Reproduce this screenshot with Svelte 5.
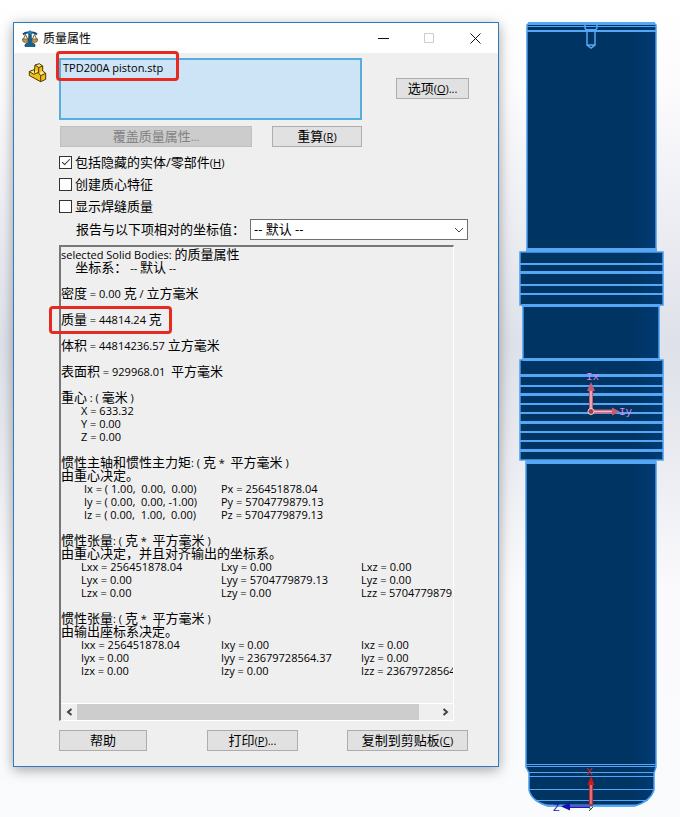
<script lang="ts">
  interface Block {
    heading: string[];
    indent?: 'wide' | 'axis';
    rows?: string[][];
  }

  const report: Block[] = [
    { heading: ['selected Solid Bodies: 的质量属性', '     坐标系： -- 默认 --'] },
    { heading: ['密度 = 0.00 克 / 立方毫米'] },
    { heading: ['质量 = 44814.24 克'] },
    { heading: ['体积 = 44814236.57 立方毫米'] },
    { heading: ['表面积 = 929968.01  平方毫米'] },
    {
      heading: ['重心 : ( 毫米 )'],
      rows: [['X = 633.32'], ['Y = 0.00'], ['Z = 0.00']],
    },
    {
      heading: ['惯性主轴和惯性主力矩: ( 克 *  平方毫米 )', '由重心决定。'],
      indent: 'axis',
      rows: [
        ['Ix = ( 1.00,  0.00,  0.00)', 'Px = 256451878.04'],
        ['Iy = ( 0.00,  0.00, -1.00)', 'Py = 5704779879.13'],
        ['Iz = ( 0.00,  1.00,  0.00)', 'Pz = 5704779879.13'],
      ],
    },
    {
      heading: ['惯性张量: ( 克 *  平方毫米 )', '由重心决定，并且对齐输出的坐标系。'],
      rows: [
        ['Lxx = 256451878.04', 'Lxy = 0.00', 'Lxz = 0.00'],
        ['Lyx = 0.00', 'Lyy = 5704779879.13', 'Lyz = 0.00'],
        ['Lzx = 0.00', 'Lzy = 0.00', 'Lzz = 5704779879.13'],
      ],
    },
    {
      heading: ['惯性张量: ( 克 *  平方毫米 )', '由输出座标系决定。'],
      rows: [
        ['Ixx = 256451878.04', 'Ixy = 0.00', 'Ixz = 0.00'],
        ['Iyx = 0.00', 'Iyy = 23679728564.37', 'Iyz = 0.00'],
        ['Izx = 0.00', 'Izy = 0.00', 'Izz = 23679728564.37'],
      ],
    },
  ];

  // y position and thickness of the grooves
  const upperGrooves = [[264, 2], [273, 3], [285, 2], [294, 2]];
  const lowerGrooves = [
    [376, 3], [386, 2], [395, 3], [404, 2], [413, 2], [423, 3], [432, 2], [441, 2], [451, 3],
  ];

  let includeHidden = $state(true);
  let createCentroid = $state(false);
  let showWeld = $state(false);

  // Chinese runs are set larger than the latin ones
  function runs(text: string) {
    return text
      .split(/([\u3000-\u9fff\uff00-\uffef]+)/)
      .filter(Boolean)
      .map((t) => ({ t, cjk: /[\u3000-\u9fff\uff00-\uffef]/.test(t) }));
  }
</script>

{#snippet mixed(text: string)}{#each runs(text) as run}{#if run.cjk}<span class="cjk">{run.t}</span>{:else}{run.t}{/if}{/each}{/snippet}

{#snippet caption(text: string, key: string, tail: string)}<span class="cjk">{text}</span>(<u>{key}</u>){tail}{/snippet}

<main class="viewport">
  <section class="dialog" aria-label="质量属性">
    <header class="titlebar">
      <svg class="app-icon" viewBox="0 0 16 17" aria-hidden="true">
        <path d="M1 4.500q3-3 7-1.500q4-1.500 7 1.500" fill="none" stroke="#174f78" stroke-width="2" />
        <path d="M3.500 4.500L1 10M3.500 4.500L6 10M12.500 4.500L10 10M12.500 4.500L15 10" stroke="#6b5a35" fill="none" />
        <path d="M0 9h6.500q-.5 3.500-3.200 3.500T0 9zM9.500 9H16q-.5 3.500-3.200 3.500T9.500 9z" fill="#c79a45" stroke="#5b4b2b" stroke-width=".7" />
        <path d="M7 1h2l.6 11 3.400 2.500V16.500H3V14.500L6.400 12z" fill="#17618f" stroke="#123a58" stroke-width=".7" />
        <circle cx="8" cy="2.500" r="1.700" fill="#2e86b8" />
      </svg>
      <h1>质量属性</h1>
      <div class="window-buttons">
        <button aria-label="最小化"><svg viewBox="0 0 11 11"><path d="M0 5.500h11" /></svg></button>
        <button aria-label="最大化" disabled><svg viewBox="0 0 11 11"><path d="M.5.5h9v9h-9z" /></svg></button>
        <button aria-label="关闭"><svg viewBox="0 0 11 11"><path d="M.5.5l10 10M10.500.5l-10 10" /></svg></button>
      </div>
    </header>

    <div class="body">
      <div class="side">
        <svg viewBox="0 0 20 20" aria-hidden="true">
          <path d="M8 2l4.300-1.300L15.700 3v5l3 2.300v6l-5 2.400L2.300 12.500V8.500l5.200-2z" fill="#f2bd1c" />
          <path d="M8 2l4.300-1.300L15.700 3l-4 1.500zM2.300 8.500l5.200-2 3.500 2.500-4.500 2zM11.500 10l4.200-2 3 2.300-5 2.500z" fill="#ffe873" />
          <path
            d="M8 2l4.300-1.300L15.700 3v5l3 2.300v6l-5 2.400L2.300 12.500V8.500l5.200-2zM8 2l3.700 2.500 4-1.500M11.700 4.500V10M2.300 8.500l4.500 2.800 4.500-1.800M7.500 6.500v3.200M11.500 10l2.200 2.700 5-2.400M13.700 12.700v6"
            fill="none"
            stroke="#4a3900"
            stroke-linejoin="round"
          />
        </svg>
      </div>

      <div class="content">
        <div class="selection">
          <div class="list-wrap">
            <select class="list" multiple size="3" aria-label="所选项目">
              <option>TPD200A piston.stp</option>
            </select>
            <span class="mark mark-file"></span>
          </div>
          <button class="btn options">{@render caption('选项', 'O', '...')}</button>
        </div>

        <div class="actions">
          <button class="btn override" disabled>{@render mixed('覆盖质量属性...')}</button>
          <button class="btn recalc">{@render caption('重算', 'R', '')}</button>
        </div>

        <div class="checks">
          <label>
            <input type="checkbox" bind:checked={includeHidden} />
            <span>{@render caption('包括隐藏的实体/零部件', 'H', '')}</span>
          </label>
          <label>
            <input type="checkbox" bind:checked={createCentroid} />
            <span class="cjk">创建质心特征</span>
          </label>
          <label>
            <input type="checkbox" bind:checked={showWeld} />
            <span class="cjk">显示焊缝质量</span>
          </label>
        </div>

        <div class="coords">
          <label class="cjk" for="coord-system">报告与以下项相对的坐标值：</label>
          <div class="dropdown">
            <select id="coord-system">
              <option>-- 默认 --</option>
            </select>
            <svg viewBox="0 0 10 6" aria-hidden="true"><path d="M1 1l4 4 4-4" /></svg>
          </div>
        </div>

        <div class="report">
          <div class="report-text">
            {#each report as block}
              <div class="block">
                {#each block.heading as line}
                  <p>{@render mixed(line)}</p>
                {/each}
                {#if block.rows}
                  <table class:axis={block.indent === 'axis'}>
                    <tbody>
                      {#each block.rows as row}
                        <tr>
                          {#each row as cell}<td>{cell}</td>{/each}
                        </tr>
                      {/each}
                    </tbody>
                  </table>
                {/if}
              </div>
            {/each}
          </div>
          <div class="scrollbar">
            <button aria-label="向左滚动"><svg viewBox="0 0 7 8"><path d="M5.500 1L2 4l3.500 3" /></svg></button>
            <div class="track"><div class="thumb"></div></div>
            <button aria-label="向右滚动"><svg viewBox="0 0 7 8"><path d="M1.500 1L5 4 1.500 7" /></svg></button>
          </div>
          <span class="mark mark-mass"></span>
        </div>

        <footer>
          <button class="btn help"><span class="cjk">帮助</span></button>
          <button class="btn print">{@render caption('打印', 'P', '...')}</button>
          <button class="btn copy">{@render caption('复制到剪贴板', 'C', '')}</button>
        </footer>
      </div>
    </div>
  </section>

  <svg class="model" viewBox="516 20 150 794" role="img" aria-label="piston">
    <defs>
      <linearGradient id="steel" x1="0" x2="1" y1="0" y2="0">
        <stop offset="0" stop-color="#003463" />
        <stop offset=".8" stop-color="#003463" />
        <stop offset="1" stop-color="#003b73" />
      </linearGradient>
    </defs>

    <g fill="url(#steel)" stroke="#4a9df0" stroke-width="1.500">
      <path d="M527 250V25l2-2h125l2 2v225z" />
      <path d="M523 305h136v54H523z" />
      <path d="M520 252h143v53H520z" />
      <path d="M520 360h143v100H520z" />
      <path d="M526 462h130v305l-2 6v17q-4 12-20 16h-85q-17-4-20-16v-17l-3-6z" />
    </g>

    <g stroke="#55a6f5" fill="none">
      <path d="M528 23.500h127" stroke-width="3" />
      <path d="M527 26.500h129M527 248.500h129" />
      <path d="M527 31h129" stroke-width="2" />
      <path d="M526 250.500h131M522 305.500h138M523 359.500h137" stroke-width="3" />
      <path d="M526 462h130" stroke-width="4" />
      {#each [...upperGrooves, ...lowerGrooves] as [y, w]}
        <path d="M520 {w === 3 ? y - 0.5 : y}h143" stroke-width={w} />
      {/each}
      <path d="M526 764.500h130M526 766.500h130M528 772.500h126M529 776.500h125M529 789.500h125M536 800.500h112" />
      <path d="M546 805.500h90" stroke-width="2" />
      <path d="M585 24v4l2 3v14l4 3 4-3V31l2-3v-4M587 45h8" stroke-width="1.500" />
      <path d="M586 30h10" stroke-width="2" />
    </g>

    <g stroke="#c85a74" fill="#c85a74">
      <path d="M591 411V390M592 411.500h22" stroke-width="4" />
      <path d="M591 411V390M592 411.500h22" stroke="#f7bcc5" stroke-width="1.500" />
      <path d="M591 382l4 9h-8zM620 411.500l-8-4v8z" stroke="none" />
      <circle cx="591" cy="411.500" r="3" fill="#a03d50" stroke="#f3d6d0" />
    </g>
    <g class="axis-label" fill="#dc86ee">
      <text x="586" y="380">Ix</text>
      <text x="619" y="415">Iy</text>
    </g>

    <path d="M591 806V784" stroke="#c22b30" stroke-width="4" />
    <path d="M591 804V784" stroke="#f08484" stroke-width="1.500" />
    <path d="M591 776l3.500 9h-7z" fill="#cc1a1a" />
    <path d="M590 806.500H568" stroke="#1b1bb5" stroke-width="3" />
    <path d="M590 806H570" stroke="#8c96e8" />
    <path d="M561 806.500l9-4v8z" fill="#1512b5" />
    <path d="M589 807l2 3m2-3l-4 4" stroke="#0b5b34" />
    <g class="axis-label">
      <text x="586" y="775" fill="#d9222c">X</text>
      <text x="553" y="811" fill="#2420bd">Z</text>
    </g>
  </svg>
</main>

<style>
  :global(body) {
    margin: 0;
    background: #fff;
  }

  .viewport {
    display: flex;
    align-items: flex-start;
    gap: 17px;
    min-height: 100vh;
    box-sizing: border-box;
    padding: 20px 14px 3px 13px;
    background: linear-gradient(180deg, #fff 0%, #fcfcfd 10%, #dfe1ea 42%, #e6e8ee 52%, #fafafc 72%, #fafbfd 100%);
    font: 11px/13px 'Open Sans', 'Noto Sans', 'Noto Sans CJK SC', sans-serif;
    color: #000;
  }

  .cjk {
    font-size: 13px;
  }

  button,
  select {
    font: inherit;
    color: inherit;
  }

  .dialog {
    flex: 1;
    min-width: 0;
    margin-top: 2px;
    border: 1px solid #2e7cbd;
    background: #efefef;
    box-shadow: 0 3px 12px rgba(0, 0, 0, 0.35);
  }

  .titlebar {
    display: flex;
    align-items: center;
    height: 30px;
    padding-left: 8px;
    background: #fff;
  }

  .app-icon {
    width: 16px;
    height: 17px;
  }

  h1 {
    flex: 1;
    margin: 0 0 0 5px;
    font-size: 12px;
    font-weight: 400;
  }

  .window-buttons {
    display: flex;
  }

  .window-buttons button {
    display: flex;
    align-items: center;
    justify-content: center;
    width: 46px;
    height: 30px;
    padding: 0;
    border: none;
    background: none;
  }

  .window-buttons svg {
    width: 11px;
    height: 11px;
    fill: none;
    stroke: #111;
  }

  .window-buttons button:disabled svg {
    stroke: #ccc;
  }

  .body {
    display: flex;
    padding: 5px 29px 15px 0;
  }

  .side {
    width: 45px;
  }

  .side svg {
    display: block;
    width: 20px;
    height: 20px;
    margin: 5px 0 0 13px;
  }

  .content {
    flex: 1;
    min-width: 0;
  }

  .selection {
    display: flex;
    align-items: flex-start;
    gap: 34px;
  }

  .list-wrap {
    position: relative;
    flex: 1;
    min-width: 0;
  }

  .list {
    display: block;
    width: 100%;
    height: 62px;
    padding: 0 2px;
    box-sizing: border-box;
    border: 2px solid #58addf;
    border-radius: 0;
    outline: none;
    background: #cde3f6;
    overflow: hidden;
  }

  .list option {
    min-height: 13px;
    padding: 0;
    line-height: 13px;
    color: #000;
  }

  .mark {
    position: absolute;
    box-sizing: border-box;
    border: 3px solid #e62a22;
    border-radius: 4px;
    pointer-events: none;
  }

  .mark-file {
    top: -7px;
    left: -3px;
    width: 123px;
    height: 30px;
  }

  .mark-mass {
    top: 59px;
    left: -12px;
    width: 123px;
    height: 28px;
  }

  .btn {
    height: 21px;
    padding: 0;
    border: 1px solid #adadad;
    border-radius: 0;
    background: #e1e1e1;
    white-space: nowrap;
    line-height: 17px;
  }

  .btn:disabled {
    border-color: #bfbfbf;
    background: #ccc;
    color: #838383;
  }

  .options {
    width: 73px;
    margin-top: 20px;
  }

  .actions {
    display: flex;
    gap: 20px;
    margin: 6px 107px 0 1px;
  }

  .override {
    flex: 1;
  }

  .recalc {
    width: 90px;
  }

  .checks {
    margin-top: 4px;
  }

  .checks label {
    display: flex;
    align-items: center;
    gap: 3px;
    height: 22px;
  }

  .checks input {
    appearance: none;
    display: grid;
    place-items: center;
    width: 13px;
    height: 13px;
    margin: 0;
    border: 1px solid #333;
    background: #fff;
  }

  .checks input:checked::before {
    content: '';
    width: 7px;
    height: 3px;
    margin-bottom: 2px;
    border: solid #333;
    border-width: 0 0 1px 1px;
    transform: rotate(-45deg);
  }

  .coords {
    display: flex;
    align-items: center;
    justify-content: space-between;
    margin: 2px 1px 0 17px;
  }

  .dropdown {
    position: relative;
    width: 218px;
  }

  .dropdown select {
    appearance: none;
    display: block;
    width: 100%;
    height: 21px;
    padding: 0 20px 0 3px;
    border: 1px solid #707070;
    border-radius: 0;
    background: #fff;
    font-size: 13px;
  }

  .dropdown svg {
    position: absolute;
    top: 8px;
    right: 4px;
    width: 10px;
    height: 6px;
    fill: none;
    stroke: #444;
    pointer-events: none;
  }

  .report {
    position: relative;
    margin: 5px 15px 0 0;
    border: 1px solid #fff;
    border-width: 2px 1px 1px 2px;
    border-color: #777 #fff #fff #777;
  }

  .report-text {
    min-height: 456px;
    padding: 1px 0 0;
    box-sizing: border-box;
    overflow-x: clip;
  }

  .block {
    margin-bottom: 13px;
  }

  p {
    height: 13px;
    margin: 0;
    white-space: pre;
  }

  table {
    border-collapse: collapse;
    margin-left: 20px;
  }

  td {
    box-sizing: border-box;
    min-width: 140px;
    padding: 0;
    white-space: pre;
  }

  .axis td:first-child {
    padding-left: 3px;
  }

  .scrollbar {
    display: flex;
    height: 16px;
    border-top: 1px solid #fff;
  }

  .scrollbar button {
    display: flex;
    align-items: center;
    justify-content: center;
    width: 16px;
    padding: 0;
    border: none;
    background: none;
  }

  .scrollbar svg {
    width: 7px;
    height: 8px;
    fill: none;
    stroke: #444;
    stroke-width: 2;
  }

  .track {
    flex: 1;
  }

  .thumb {
    width: 95%;
    height: 100%;
    background: #cdcdcd;
  }

  footer {
    display: flex;
    margin: 9px 1px 0 0;
  }

  .help {
    width: 88px;
  }

  .print {
    width: 91px;
    margin-left: 60px;
  }

  .copy {
    width: 121px;
    margin-left: auto;
  }

  .model {
    flex: none;
    width: 150px;
    height: auto;
  }

  .axis-label {
    font-family: 'Liberation Mono', monospace;
    font-size: 11px;
  }
</style>
